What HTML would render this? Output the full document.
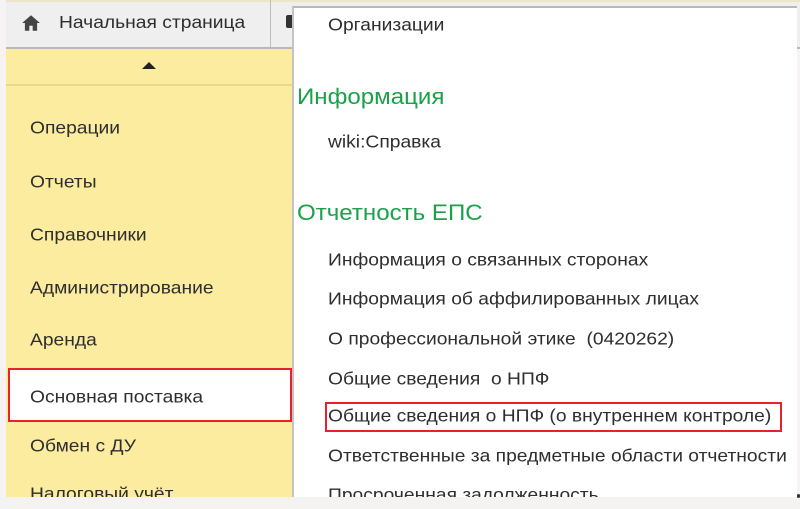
<!DOCTYPE html>
<html><head><meta charset="utf-8"><style>
body{margin:0;width:800px;height:509px;overflow:hidden;background:#f7f3f3;font-family:"Liberation Sans",Arial,sans-serif;position:relative;color:#2e2e2e}
.a{position:absolute;white-space:nowrap}
.l{font-size:17.5px;left:30px;transform-origin:left center;transform:translateY(-50%) scaleX(1.1)}
.r{font-size:17.5px;left:328px;transform-origin:left center;transform:translateY(-50%) scaleX(1.1)}
.g{font-size:22.5px;left:297px;color:#1aa14a;transform-origin:left center;transform:translateY(-50%) scaleX(1.07)}
</style></head><body>
<div class="a" style="left:6px;top:0;width:794px;height:47px;background:#efefef;border-bottom:2px solid #b8b8b8"></div>
<div class="a" style="left:6px;top:0;width:794px;height:2px;background:#ece6c8"></div>
<div class="a" style="left:270px;top:0;width:1px;height:47px;background:#bdbdbd"></div>
<svg class="a" style="left:21px;top:14px" width="20" height="18" viewBox="0 0 18 16"><path d="M9 1 L1 8 H3.5 V15 H7.5 V10.5 H10.5 V15 H14.5 V8 H17 Z" fill="#444"/></svg>
<div class="a" style="left:59px;top:12px;font-size:17.5px;transform-origin:left center;transform:scaleX(1.1)">Начальная страница</div>
<div class="a" style="left:286px;top:15px;width:8px;height:13px;background:#333;border-radius:2px"></div>
<div class="a" style="left:6px;top:49px;width:286px;height:448px;background:#fbeca0"></div>
<div class="a" style="left:6px;top:84px;width:286px;height:2px;background:#e9d98a"></div>
<div class="a" style="left:142px;top:62px;width:0;height:0;border-left:7px solid transparent;border-right:7px solid transparent;border-bottom:7px solid #222"></div>
<div class="a l" style="top:128px">Операции</div>
<div class="a l" style="top:182px">Отчеты</div>
<div class="a l" style="top:235px">Справочники</div>
<div class="a l" style="top:288px">Администрирование</div>
<div class="a l" style="top:340px">Аренда</div>
<div class="a" style="left:8px;top:368px;width:280px;height:50px;background:#fff;border:2px solid #e8222a"></div>
<div class="a l" style="top:397px">Основная поставка</div>
<div class="a l" style="top:446px">Обмен с ДУ</div>
<div class="a l" style="top:494px">Налоговый учёт</div>
<div class="a" style="left:292px;top:6px;width:505px;height:491px;background:#fff;border-left:2px solid #c4c4c4;border-top:2px solid #b8b8b8;box-sizing:border-box"></div>
<div class="a r" style="top:25px">Организации</div>
<div class="a g" style="top:97px">Информация</div>
<div class="a r" style="top:142px">wiki:Справка</div>
<div class="a g" style="top:213px">Отчетность ЕПС</div>
<div class="a r" style="top:260px">Информация о связанных сторонах</div>
<div class="a r" style="top:299px">Информация об аффилированных лицах</div>
<div class="a r" style="top:339px">О профессиональной этике&nbsp; (0420262)</div>
<div class="a r" style="top:379px">Общие сведения&nbsp; о НПФ</div>
<div class="a" style="left:325px;top:402px;width:453px;height:26px;border:2px solid #e8222a"></div>
<div class="a r" style="top:416px">Общие сведения о НПФ (о внутреннем контроле)</div>
<div class="a r" style="top:456px">Ответственные за предметные области отчетности</div>
<div class="a r" style="top:495px">Просроченная задолженность</div>
<div class="a" style="left:0;top:497px;width:800px;height:12px;background:#f5f2f2"></div>
<div class="a" style="left:797px;top:494px;width:3px;height:4px;background:#333;border-radius:2px"></div>
</body></html>
